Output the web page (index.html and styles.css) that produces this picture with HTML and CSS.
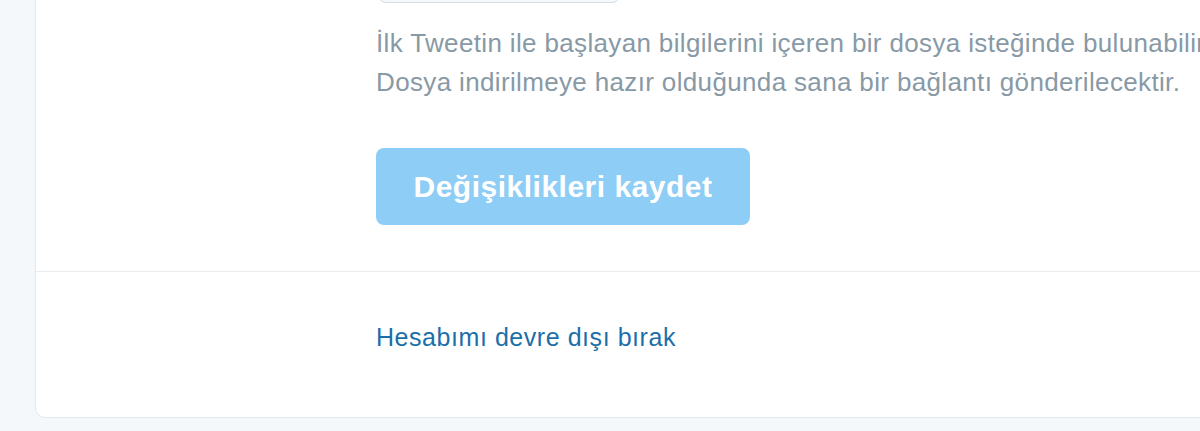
FILE: index.html
```html
<!DOCTYPE html>
<html lang="tr">
<head>
  <meta charset="UTF-8">
  <title>Hesap ayarları</title>
  <link rel="stylesheet" href="styles.css">
</head>
<body>
  <div class="card">
    <div class="section">
      <div class="prev-btn"></div>
      <p class="help">İlk Tweetin ile başlayan bilgilerini içeren bir dosya isteğinde bulunabilirsin.<br>Dosya indirilmeye hazır olduğunda sana bir bağlantı gönderilecektir.</p>
      <button class="save-btn" disabled>Değişiklikleri kaydet</button>
    </div>
    <div class="section footer">
      <a class="deactivate" href="#">Hesabımı devre dışı bırak</a>
    </div>
  </div>
</body>
</html>
```

FILE: styles.css
```css
html, body {
  margin: 0;
  padding: 0;
  overflow: hidden;
  height: 100%;
}

body {
  background: #f5f8fa;
  font-family: "Liberation Sans", Arial, sans-serif;
}

.card {
  margin: -20px 0 0 35px;
  width: 1300px;
  background: #fff;
  border: 1px solid #e1e8ed;
  border-radius: 10px;
}

.section {
  padding: 0 0 46px 340px;
}

.prev-btn {
  margin-top: -20px;
  width: 240px;
  height: 40px;
  margin-left: 2px;
  border: 1px solid #d4dde3;
  border-radius: 8px;
  background: #f5f8fa;
}

.help {
  margin: 21px 0 0;
  font-size: 26px;
  letter-spacing: 0.35px;
  line-height: 39px;
  color: #8899a6;
  white-space: nowrap;
}

.save-btn {
  display: block;
  margin-top: 46px;
  width: 374px;
  height: 77px;
  border: 0;
  border-radius: 8px;
  background: #8ecdf5;
  color: #fff;
  font-family: inherit;
  font-weight: bold;
  font-size: 30px;
  letter-spacing: 0.5px;
  padding: 0;
}

.footer {
  border-top: 1px solid #e6ecf0;
  padding-top: 50px;
  padding-bottom: 65px;
}

.deactivate {
  display: block;
  font-size: 25px;
  letter-spacing: 0.55px;
  line-height: 30px;
  color: #1b6fa8;
  text-decoration: none;
}
```
